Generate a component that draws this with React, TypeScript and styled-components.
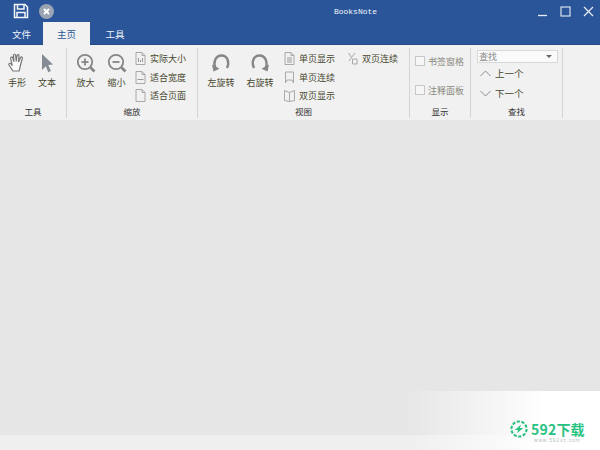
import React from "react";
import styled, { createGlobalStyle } from "styled-components";

const Global = createGlobalStyle`
  html, body { margin: 0; padding: 0; background: #e6e6e6; }
  body { font-family: "Noto Sans CJK SC", "Noto Sans", sans-serif; }
`;

const Page = styled.div`
  position: relative;
  width: 600px;
  height: 450px;
  overflow: hidden;
  display: flex;
  flex-direction: column;
  background: #e6e6e6;
`;

const TitleBar = styled.header`
  height: 45px;
  flex: none;
  background: #2a5699;
  border-bottom: 1px solid #234a85;
  box-sizing: border-box;
  display: flex;
  flex-direction: column;
`;

const TitleRow = styled.div`
  height: 22px;
  flex: none;
  display: flex;
  align-items: center;
  padding: 0 6px 0 13px;
`;

const QuickButton = styled.span`
  display: flex;
  width: 16px;
  height: 16px;
  margin-right: 10px;
  align-items: center;
`;

const AppTitle = styled.div`
  flex: 1;
  text-align: center;
  font: 8px "Liberation Mono", monospace;
  color: #f2f5fa;
  padding-left: 109px;
`;

const WindowButtons = styled.div`
  display: flex;
  gap: 12px;
  align-items: center;
`;

const Tabs = styled.nav`
  height: 22px;
  display: flex;
`;

const Tab = styled.div<{ $active?: boolean; $w: number }>`
  width: ${(p) => p.$w}px;
  height: 23px;
  box-sizing: border-box;
  text-align: center;
  font-size: 9.5px;
  line-height: 25px;
  color: ${(p) => (p.$active ? "#2a5699" : "#eef2f8")};
  background: ${(p) => (p.$active ? "#f1f1f1" : "transparent")};
`;

const Ribbon = styled.section`
  height: 75px;
  flex: none;
  box-sizing: border-box;
  padding: 3px 0 2px;
  background: #f1f1f1;
  display: flex;
`;

const Group = styled.div<{ $w: number }>`
  width: ${(p) => p.$w}px;
  flex: none;
  box-sizing: border-box;
  border-right: 1px solid #d4d4d4;
  display: flex;
  flex-direction: column;
`;

const GroupBody = styled.div<{ $pad?: number }>`
  flex: 1;
  min-height: 0;
  display: flex;
  padding-left: ${(p) => p.$pad ?? 0}px;
`;

const GroupLabel = styled.div`
  height: 13px;
  flex: none;
  text-align: center;
  font-size: 8.5px;
  line-height: 13px;
  color: #333;
`;

const BigButton = styled.div<{ $w: number }>`
  width: ${(p) => p.$w}px;
  flex: none;
  display: flex;
  flex-direction: column;
  align-items: center;
  padding-top: 5px;
  font-size: 9px;
  line-height: 12px;
  color: #47472f;
  svg { margin-bottom: 4px; }
`;

const SmallColumn = styled.div<{ $ml?: number }>`
  display: flex;
  flex-direction: column;
  margin-left: ${(p) => p.$ml ?? 0}px;
  padding-top: 1px;
`;

const SmallButton = styled.div`
  height: 19px;
  display: flex;
  align-items: center;
  gap: 4px;
  font-size: 9px;
  color: #47472f;
  white-space: nowrap;
`;

const CheckColumn = styled.div`
  display: flex;
  flex-direction: column;
  gap: 17px;
  padding: 7px 0 0 5px;
`;

const CheckRow = styled.label`
  display: flex;
  align-items: center;
  gap: 3px;
  height: 12px;
  font-size: 9px;
  color: #8a8a80;
  white-space: nowrap;
`;

const CheckBox = styled.span`
  width: 10px;
  height: 10px;
  box-sizing: border-box;
  border: 1px solid #c8c8c8;
  background: #f6f6f6;
`;

const FindColumn = styled.div`
  display: flex;
  flex-direction: column;
  padding: 2px 0 0 6px;
`;

const FindBox = styled.div`
  width: 81px;
  height: 13px;
  box-sizing: border-box;
  border: 1px solid #d8d8d8;
  background: #fafafa;
  display: flex;
  align-items: center;
  justify-content: space-between;
  padding: 0 5px 0 1px;
  font-size: 9px;
  color: #8a8a8a;
`;

const Caret = styled.span`
  width: 0;
  height: 0;
  border-left: 3px solid transparent;
  border-right: 3px solid transparent;
  border-top: 3px solid #666;
`;

const FindButton = styled.div`
  height: 20px;
  display: flex;
  align-items: center;
  gap: 4px;
  padding-left: 3px;
  font-size: 9.5px;
  color: #47472f;
`;

const Content = styled.main`
  flex: 1;
  background: #e6e6e6;
`;

const StatusBar = styled.footer`
  height: 15px;
  flex: none;
  background: #efefef;
`;

const Watermark = styled.div`
  position: absolute;
  left: 405px;
  right: 0;
  top: 391px;
  bottom: 0;
  background: linear-gradient(90deg, rgba(255,255,255,0) 0%, rgba(255,255,255,0.55) 40%, #fff 72%);
`;

const MarkRow = styled.div`
  position: absolute;
  left: 510px;
  top: 420px;
  display: flex;
  align-items: center;
  gap: 3px;
`;

const MarkText = styled.div`
  font: 700 14px/17px "Noto Sans CJK SC", "Noto Sans", sans-serif;
  color: #27c27f;
  letter-spacing: 0.2px;
`;

const MarkSub = styled.div`
  position: absolute;
  left: 534px;
  top: 437px;
  font: 5px/7px "Liberation Sans", sans-serif;
  letter-spacing: 0.8px;
  color: #b4bfb8;
`;

const Mag = ({ plus }: { plus?: boolean }) => (
  <svg width="20" height="20" viewBox="0 0 20 20" fill="none" stroke="#858585" strokeWidth="1.8">
    <circle cx="9" cy="9" r="7.2" />
    <path d="M14.5 14.5L18.5 18.5" strokeWidth={2.6} />
    <path d="M5.5 9h7" />
    {plus && <path d="M9 5.5v7" />}
  </svg>
);

const Rotate = ({ right }: { right?: boolean }) => (
  <svg width="20" height="20" viewBox="0 0 20 20" fill="none" style={right ? { transform: "scaleX(-1)" } : undefined}>
    <path d="M4.5 15.5C1.8 9.5 4.5 2.5 10.5 2.5c6 0 8.3 6.6 5.5 12.5" stroke="#868686" strokeWidth="2.4" />
    <path d="M1 11.5l7.5 4.2-6 2.8z" fill="#868686" />
  </svg>
);

const IconFrame = styled.svg.attrs({
  width: 11,
  height: 13,
  viewBox: "0 0 11 13",
  fill: "none",
  stroke: "#a8a8a8",
  strokeWidth: 1,
})`
  flex: none;
`;

const Doc = ({ mark }: { mark?: string }) => (
  <IconFrame>
    <path d="M1 .5h6l3 3v9H1z" />
    <path d="M7 .5v3h3" />
    {mark && <path d={mark} stroke="#999" />}
  </IconFrame>
);

const Bookmark = () => (
  <IconFrame><path d="M1.5 1h8v11l-1.5-3h-5l-1.5 3z" /></IconFrame>
);

const OpenBook = () => (
  <IconFrame><path d="M.5 1.5l5 2 5-2v10l-5 1-5-1zM5.5 3.5v9" /></IconFrame>
);

const Spread = () => (
  <IconFrame><path d="M1.5 1l3 4.5M8 1L4.5 5.5M4.5 5.5L2 9M5.5 7h4.5v5H5.5z" /></IconFrame>
);

const Hand = () => (
  <svg width="20" height="20" viewBox="0 0 20 20" fill="#fbfbfb" stroke="#787878" strokeWidth="1.2">
    <path d="M6 18l-4-6c-.8-1.4 1-2.3 2-1l1.3 1.6L3.6 5.4c-.3-1.5 1.6-2 2.1-.5l1.3 4-.5-6.4c-.1-1.6 1.9-1.7 2.1-.1l.7 6L10 2.6c.2-1.5 2.1-1.3 2 .2l-.5 6.2 2-4.3c.7-1.3 2.3-.6 1.8.8l-1.8 6.5c-.5 2-.8 3.5-1.3 6z" />
  </svg>
);

const Arrow = () => (
  <svg width="20" height="20" viewBox="0 0 20 20">
    <path d="M5 1l11 10.5-4.7.5 2.6 6-2.6 1.2-2.5-6L5 17z" fill="#848b92" />
  </svg>
);

const Chevron = ({ up }: { up?: boolean }) => (
  <svg width="11" height="7" viewBox="0 0 11 7" fill="none" stroke="#8a8a8a" strokeWidth="1">
    <path d={up ? "M.5 6L5.5 1l5 5" : "M.5 1l5 5 5-5"} />
  </svg>
);

const Spark = () => (
  <svg width="18" height="18" viewBox="0 0 19 19" fill="none">
    <circle cx="9.5" cy="9.5" r="8" stroke="#27c27f" strokeWidth="2.2" strokeDasharray="3.4 1.6" />
    <path d="M11.5 5L5 10.5h3.5L7.5 14l6.5-5.5h-3.5z" fill="#27c27f" />
  </svg>
);

export default function App() {
  return (
    <Page>
      <Global />
      <TitleBar>
        <TitleRow>
          <QuickButton>
            <svg width="16" height="16" viewBox="0 0 16 16" fill="none" stroke="#f2f5fa" strokeWidth="1.5">
              <path d="M1.5 1.5h10.5L14.5 4v10.5h-13z" />
              <path d="M4.5 1.5v4.5h6.5V1.5M4 14.5V9.5h8v5" />
            </svg>
          </QuickButton>
          <QuickButton>
            <svg width="15" height="15" viewBox="0 0 15 15">
              <circle cx="7.5" cy="7.5" r="7.5" fill="#9aa4b3" />
              <path d="M5 5l5 5M10 5l-5 5" stroke="#fff" strokeWidth="1.8" />
            </svg>
          </QuickButton>
          <AppTitle>BooksNote</AppTitle>
          <WindowButtons>
            <svg width="11" height="11" viewBox="0 0 11 11" stroke="#e8edf6" strokeWidth="1.3"><path d="M1 9.5h9" /></svg>
            <svg width="11" height="11" viewBox="0 0 11 11" fill="none" stroke="#e8edf6" strokeWidth="1.1"><rect x="1" y="1" width="9" height="9" /></svg>
            <svg width="11" height="11" viewBox="0 0 11 11" stroke="#e8edf6" strokeWidth="1.2"><path d="M1 1l9 9M10 1l-9 9" /></svg>
          </WindowButtons>
        </TitleRow>
        <Tabs>
          <Tab $w={43}>文件</Tab>
          <Tab $w={47} $active>主页</Tab>
          <Tab $w={50}>工具</Tab>
        </Tabs>
      </TitleBar>
      <Ribbon>
        <Group $w={67}>
          <GroupBody $pad={2}>
            <BigButton $w={30}><Hand />手形</BigButton>
            <BigButton $w={30}><Arrow />文本</BigButton>
          </GroupBody>
          <GroupLabel>工具</GroupLabel>
        </Group>
        <Group $w={131}>
          <GroupBody $pad={3}>
            <BigButton $w={31}><Mag plus />放大</BigButton>
            <BigButton $w={31}><Mag />缩小</BigButton>
            <SmallColumn $ml={3}>
              <SmallButton><Doc mark="M3.5 6v4M5.5 8v2M7.5 6v4" />实际大小</SmallButton>
              <SmallButton><Doc mark="M2.5 8.5h6" />适合宽度</SmallButton>
              <SmallButton><Doc />适合页面</SmallButton>
            </SmallColumn>
          </GroupBody>
          <GroupLabel>缩放</GroupLabel>
        </Group>
        <Group $w={212}>
          <GroupBody $pad={3}>
            <BigButton $w={40}><Rotate />左旋转</BigButton>
            <BigButton $w={38}><Rotate right />右旋转</BigButton>
            <SmallColumn $ml={5}>
              <SmallButton><Doc mark="M3 6h5M3 8h5M3 10h5" />单页显示</SmallButton>
              <SmallButton><Bookmark />单页连续</SmallButton>
              <SmallButton><OpenBook />双页显示</SmallButton>
            </SmallColumn>
            <SmallColumn $ml={12}>
              <SmallButton><Spread />双页连续</SmallButton>
            </SmallColumn>
          </GroupBody>
          <GroupLabel>视图</GroupLabel>
        </Group>
        <Group $w={61}>
          <GroupBody>
            <CheckColumn>
              <CheckRow><CheckBox />书签窗格</CheckRow>
              <CheckRow><CheckBox />注释面板</CheckRow>
            </CheckColumn>
          </GroupBody>
          <GroupLabel>显示</GroupLabel>
        </Group>
        <Group $w={92}>
          <GroupBody>
            <FindColumn>
              <FindBox>查找<Caret /></FindBox>
              <FindButton><Chevron up />上一个</FindButton>
              <FindButton><Chevron />下一个</FindButton>
            </FindColumn>
          </GroupBody>
          <GroupLabel>查找</GroupLabel>
        </Group>
      </Ribbon>
      <Content />
      <StatusBar />
      <Watermark />
      <MarkRow>
        <Spark />
        <MarkText>592下载</MarkText>
      </MarkRow>
      <MarkSub>www.592xz.com</MarkSub>
    </Page>
  );
}
